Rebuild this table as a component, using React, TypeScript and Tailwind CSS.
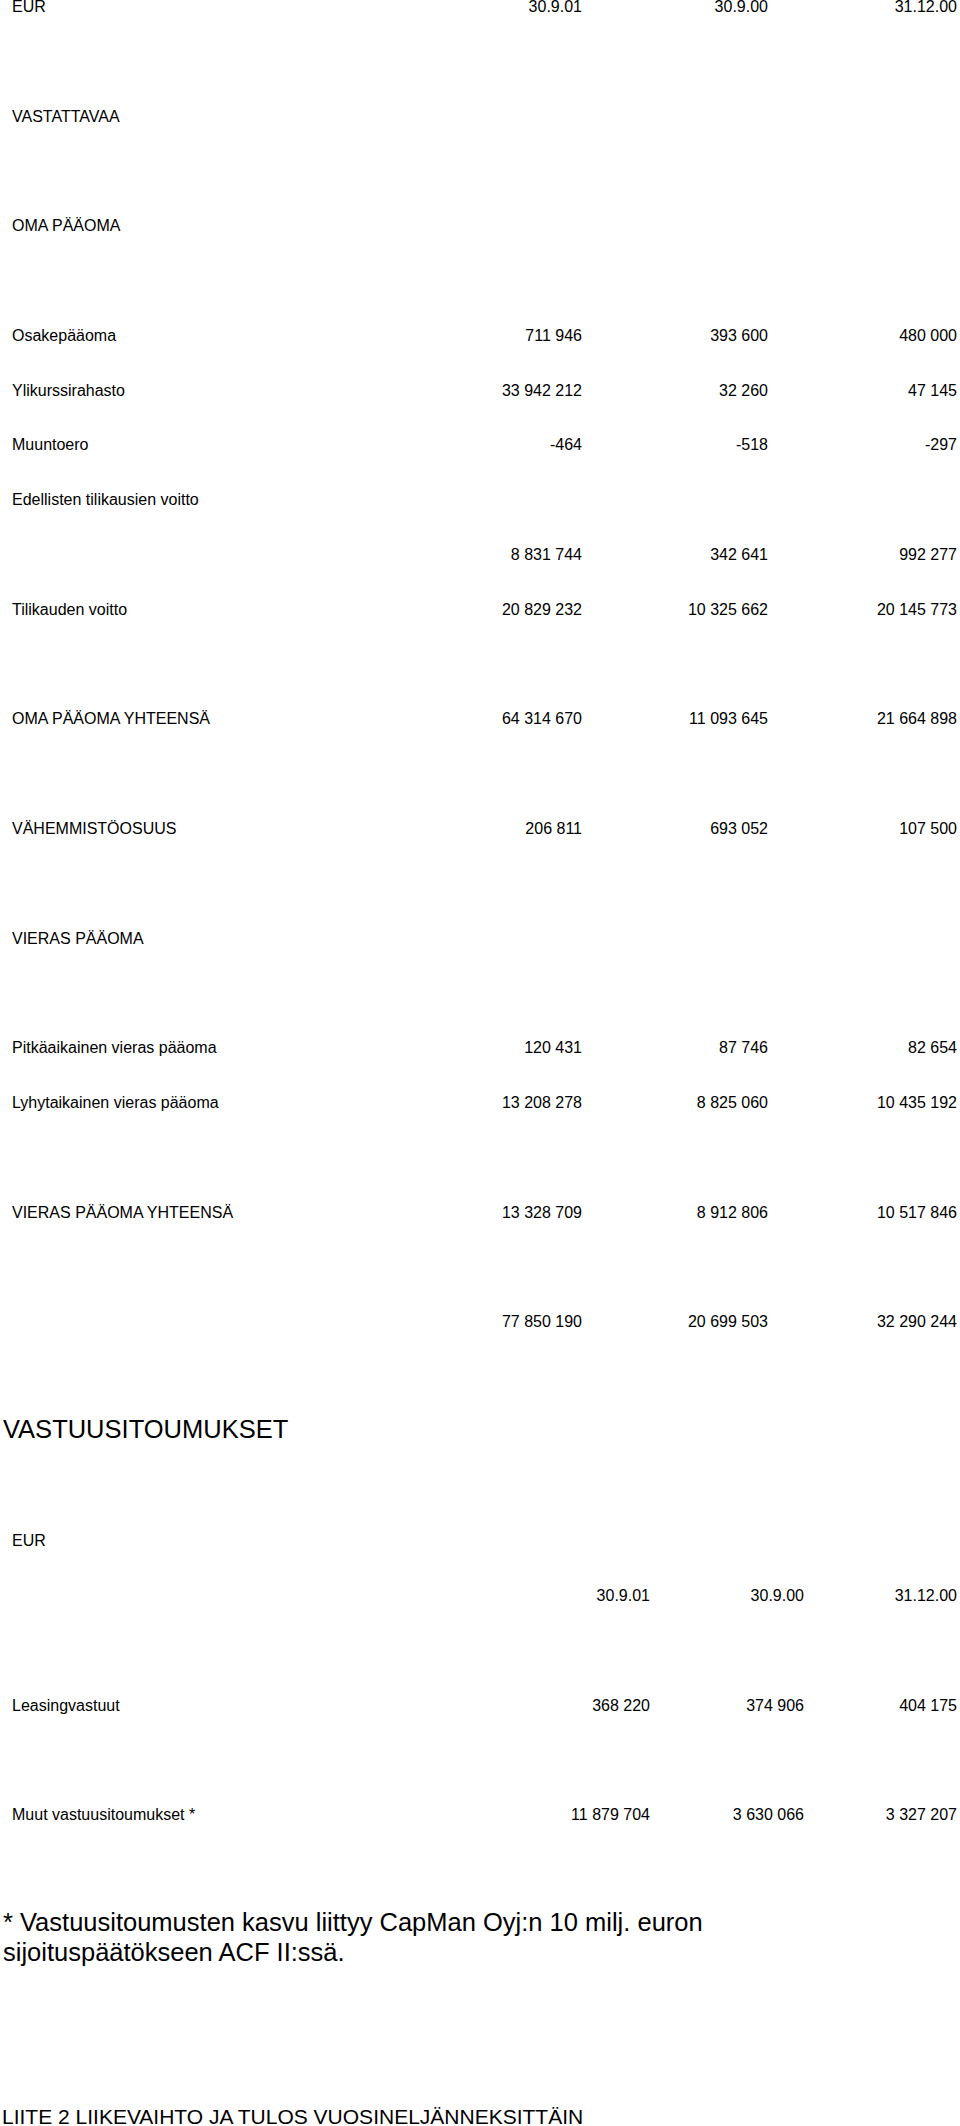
import React from 'react';

type Row = { label?: string; v?: [string, string, string] } | null;

// vastattavaa-taulukko, rivit 54.8px välein
const balance: Row[] = [
  { label: 'EUR', v: ['30.9.01', '30.9.00', '31.12.00'] },
  null,
  { label: 'VASTATTAVAA' },
  null,
  { label: 'OMA PÄÄOMA' },
  null,
  { label: 'Osakepääoma', v: ['711 946', '393 600', '480 000'] },
  { label: 'Ylikurssirahasto', v: ['33 942 212', '32 260', '47 145'] },
  { label: 'Muuntoero', v: ['-464', '-518', '-297'] },
  { label: 'Edellisten tilikausien voitto' },
  { label: '', v: ['8 831 744', '342 641', '992 277'] },
  { label: 'Tilikauden voitto', v: ['20 829 232', '10 325 662', '20 145 773'] },
  null,
  { label: 'OMA PÄÄOMA YHTEENSÄ', v: ['64 314 670', '11 093 645', '21 664 898'] },
  null,
  { label: 'VÄHEMMISTÖOSUUS', v: ['206 811', '693 052', '107 500'] },
  null,
  { label: 'VIERAS PÄÄOMA' },
  null,
  { label: 'Pitkäaikainen vieras pääoma', v: ['120 431', '87 746', '82 654'] },
  { label: 'Lyhytaikainen vieras pääoma', v: ['13 208 278', '8 825 060', '10 435 192'] },
  null,
  { label: 'VIERAS PÄÄOMA YHTEENSÄ', v: ['13 328 709', '8 912 806', '10 517 846'] },
  null,
  { label: '', v: ['77 850 190', '20 699 503', '32 290 244'] },
  null,
];

const commitments: Row[] = [
  null,
  { label: 'EUR' },
  { label: '', v: ['30.9.01', '30.9.00', '31.12.00'] },
  null,
  { label: 'Leasingvastuut', v: ['368 220', '374 906', '404 175'] },
  null,
  { label: 'Muut vastuusitoumukset *', v: ['11 879 704', '3 630 066', '3 327 207'] },
];

function Table({ rows, cols }: { rows: Row[]; cols: string }) {
  return (
    <>
      {rows.map((r, i) =>
        r === null ? (
          <div key={i} className="h-[54.8px]" />
        ) : (
          <div key={i} className={`grid h-[54.8px] items-center pl-[12px] pr-[3px] ${cols}`}>
            <div className="whitespace-nowrap">{r.label}</div>
            {r.v?.map((x, j) => (
              <div key={j} className="whitespace-nowrap text-right">
                {x}
              </div>
            ))}
          </div>
        )
      )}
    </>
  );
}

export default function App() {
  return (
    <div className="min-h-screen overflow-hidden bg-white text-black font-['Liberation_Sans',Arial,sans-serif] text-[16px]">
      <div className="-mt-[20.4px] flex flex-col">
        <Table rows={balance} cols="grid-cols-[1fr_150px_186px_189px]" />

        {/* vastuusitoumukset */}
        <div className="flex h-[54.8px] items-center pb-[6px] pl-[3px] text-[25.5px]">VASTUUSITOUMUKSET</div>
        <Table rows={commitments} cols="grid-cols-[1fr_150px_154px_153px]" />

        <p className="mt-[64px] pl-[3px] text-[25.5px] leading-[30px] whitespace-nowrap">
          * Vastuusitoumusten kasvu liittyy CapMan Oyj:n 10 milj. euron
          <br />
          sijoituspäätökseen ACF II:ssä.
        </p>

        <p className="mt-[137px] pl-[2px] text-[21px] leading-[25px] whitespace-nowrap">
          LIITE 2 LIIKEVAIHTO JA TULOS VUOSINELJÄNNEKSITTÄIN
        </p>
      </div>
    </div>
  );
}
